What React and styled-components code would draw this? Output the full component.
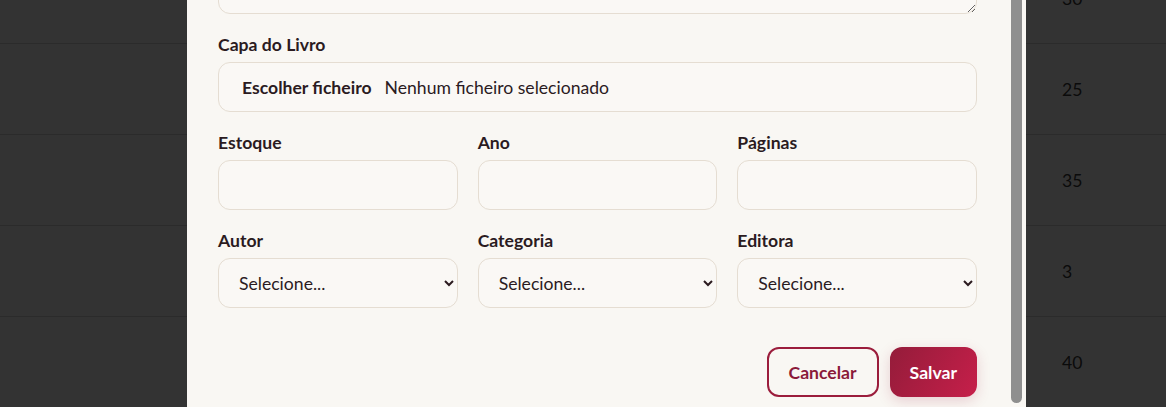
import React, { useLayoutEffect, useRef } from 'react';
import styled, { createGlobalStyle } from 'styled-components';

const GlobalStyle = createGlobalStyle`
  html, body {
    margin: 0;
    padding: 0;
    height: 100%;
    overflow: hidden;
    font-family: "Lato", "Noto Sans", sans-serif;
    background: #ffffff;
  }
  * { box-sizing: border-box; }
`;

const stock = [30, 25, 35, 3, 40];
const books = ['Dom Casmurro', 'O Alquimista', 'Memórias Póstumas', 'Capitães da Areia', 'A Hora da Estrela'];

function App() {
  const bodyRef = useRef(null);

  useLayoutEffect(() => {
    if (bodyRef.current) {
      bodyRef.current.scrollTop = bodyRef.current.scrollHeight;
    }
  }, []);

  return (
    <>
      <GlobalStyle />
      {/* Page behind - table of books */}
      <Table>
        {books.map((title, i) => (
          <Row key={title}>
            <Cell>{title}</Cell>
            <Cell>{stock[i]}</Cell>
          </Row>
        ))}
      </Table>

      {/* Modal */}
      <Overlay>
        <Modal>
          <ModalBody ref={bodyRef}>
            <ModalTitle>Editar Livro</ModalTitle>
            <Form>
              <Field>
                <Label>Título</Label>
                <Input type="text" />
              </Field>
              <Field>
                <Label>ISBN</Label>
                <Input type="text" />
              </Field>
              <Field>
                <Label>Descrição</Label>
                <TextArea rows={4} />
              </Field>
              <Field>
                <Label>Capa do Livro</Label>
                <FileBox>
                  <FileButton>Escolher ficheiro</FileButton>
                  <FileName>Nenhum ficheiro selecionado</FileName>
                </FileBox>
              </Field>
              <Grid>
                <Field>
                  <Label>Estoque</Label>
                  <Input type="number" />
                </Field>
                <Field>
                  <Label>Ano</Label>
                  <Input type="number" />
                </Field>
                <Field>
                  <Label>Páginas</Label>
                  <Input type="number" />
                </Field>
              </Grid>
              <Grid>
                <Field>
                  <Label>Autor</Label>
                  <Select defaultValue="">
                    <option value="">Selecione...</option>
                  </Select>
                </Field>
                <Field>
                  <Label>Categoria</Label>
                  <Select defaultValue="">
                    <option value="">Selecione...</option>
                  </Select>
                </Field>
                <Field>
                  <Label>Editora</Label>
                  <Select defaultValue="">
                    <option value="">Selecione...</option>
                  </Select>
                </Field>
              </Grid>
            </Form>
            <Actions>
              <Button variant="outline">Cancelar</Button>
              <Button>Salvar</Button>
            </Actions>
          </ModalBody>
          <ScrollTrack>
            <ScrollThumb />
          </ScrollTrack>
        </Modal>
      </Overlay>
    </>
  );
}

const Table = styled.div`
  margin-top: -47px;
  font-size: 17.6px;
  color: #3a3a3a;
`;

const Row = styled.div`
  display: grid;
  grid-template-columns: 1fr 104px;
  height: 91px;
  align-items: center;
  border-bottom: 1px solid #d8d8d8;
`;

const Cell = styled.div`
  &:first-child {
    padding-left: 240px;
  }
`;

const Overlay = styled.div`
  position: fixed;
  inset: 0;
  background: rgba(0, 0, 0, 0.8);
  display: flex;
  align-items: flex-end;
  overflow: hidden;
`;

const Modal = styled.div`
  flex-shrink: 0;
  margin-left: 187px;
  width: 839px;
  height: 600px;
  background: #f9f7f3;
  display: flex;
`;

const ModalBody = styled.div`
  flex: 1;
  min-width: 0;
  overflow-y: auto;
  scrollbar-width: none;
  padding: 32px 34px 10px 31px;
  color: #2b1b1f;
`;

const ScrollTrack = styled.div`
  width: 15px;
  flex-shrink: 0;
  display: flex;
  flex-direction: column;
  justify-content: flex-end;
  padding: 0 4px 4px 0;
`;

const ScrollThumb = styled.div`
  height: 440px;
  background: #8f8f8f;
  border-radius: 6px;
`;

const ModalTitle = styled.h2`
  margin: 0 0 24px;
  font-size: 24px;
  font-weight: 700;
  color: #7d1733;
`;

const Form = styled.div`
  display: flex;
  flex-direction: column;
  gap: 19px;
`;

const Grid = styled.div`
  display: grid;
  grid-template-columns: repeat(3, 1fr);
  column-gap: 20px;
`;

const Field = styled.div`
  display: flex;
  flex-direction: column;
`;

const Label = styled.label`
  font-size: 17.6px;
  font-weight: 700;
  line-height: 24px;
  margin-bottom: 5px;
  color: #2b1b1f;
`;

const controlBase = `
  width: 100%;
  border: 1px solid #e5ddd2;
  border-radius: 12px;
  background: #faf8f5;
  font-family: "Lato", "Noto Sans", sans-serif;
  font-size: 17.6px;
  color: #2b1b1f;
  outline: none;
`;

const Input = styled.input`
  ${controlBase}
  height: 50px;
  padding: 0 20px;
`;

const TextArea = styled.textarea`
  ${controlBase}
  display: block;
  height: 100px;
  padding: 14px 20px;
  resize: vertical;
`;

const Select = styled.select`
  ${controlBase}
  height: 50px;
  padding: 0 17px 0 16px;
`;

const FileBox = styled.div`
  ${controlBase}
  height: 50px;
  display: flex;
  align-items: center;
  gap: 13px;
  padding: 0 23px;
`;

const FileButton = styled.span`
  font-weight: 700;
`;

const FileName = styled.span`
  font-weight: 400;
`;

const Actions = styled.div`
  display: flex;
  justify-content: flex-end;
  gap: 11px;
  margin-top: 39px;
`;

const Button = styled.button`
  height: 50px;
  padding: 0 20px;
  border-radius: 12px;
  font-family: "Lato", "Noto Sans", sans-serif;
  font-size: 17.6px;
  font-weight: 700;
  cursor: pointer;
  border: ${(p) => (p.variant === 'outline' ? '2px solid #9b1d3c' : 'none')};
  color: ${(p) => (p.variant === 'outline' ? '#8b1a3a' : '#ffffff')};
  background: ${(p) =>
    p.variant === 'outline' ? 'transparent' : 'linear-gradient(120deg, #941c3a 0%, #c61f4a 100%)'};
  box-shadow: ${(p) => (p.variant === 'outline' ? 'none' : '0 4px 14px rgba(155, 29, 60, 0.18)')};
`;

export default App;
